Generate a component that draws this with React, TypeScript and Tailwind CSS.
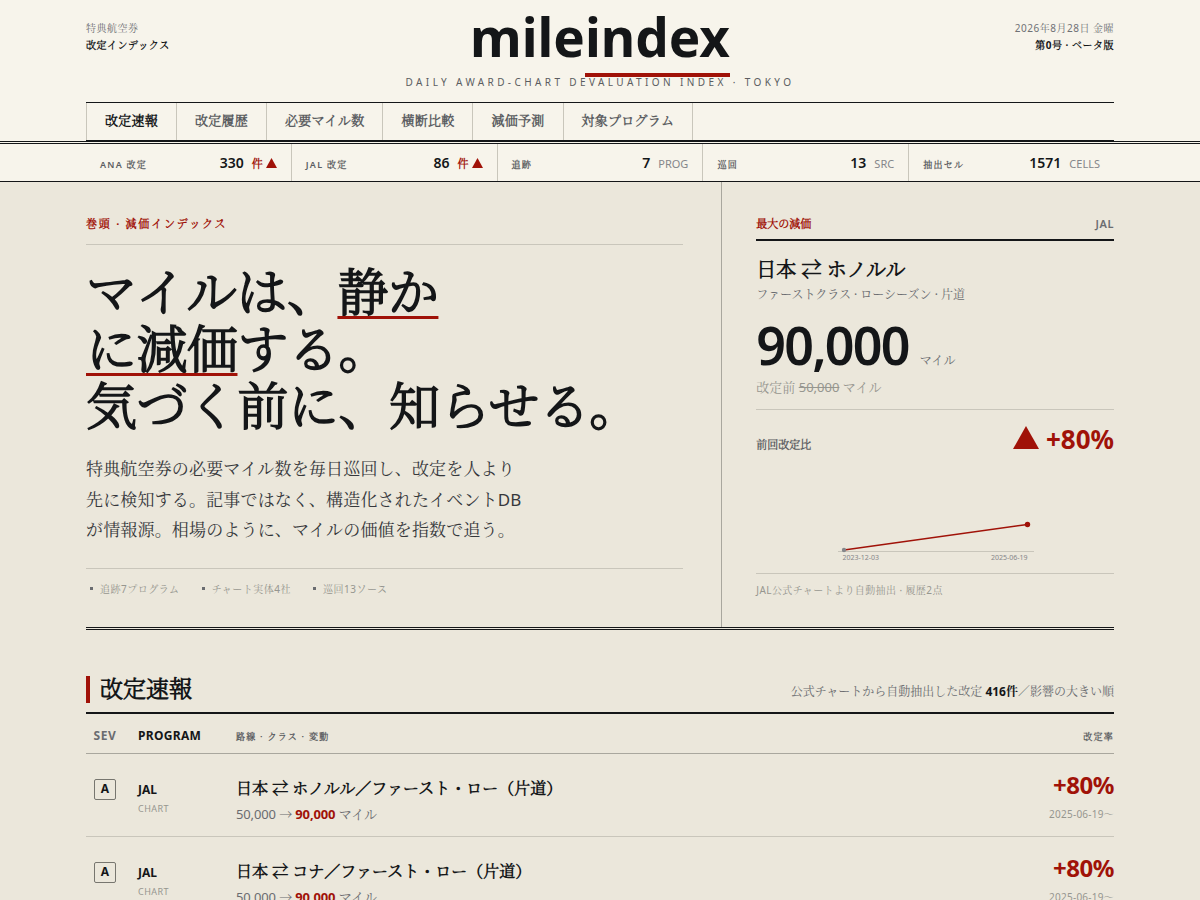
import type { ReactNode } from 'react';

// running text uses the regular cut, headings and labels embolden the light one
const PLAIN = "font-['Noto_Sans','Noto_Serif_CJK_JP','Noto_Sans_CJK_JP',serif]";

const NAV = ['改定速報', '改定履歴', '必要マイル数', '横断比較', '減価予測', '対象プログラム'];

interface Tick {
  label: string;
  value: string;
  unit: string;
  up?: boolean;
}

const TICKS: Tick[] = [
  { label: 'ANA 改定', value: '330', unit: '件', up: true },
  { label: 'JAL 改定', value: '86', unit: '件', up: true },
  { label: '追跡', value: '7', unit: 'PROG' },
  { label: '巡回', value: '13', unit: 'SRC' },
  { label: '抽出セル', value: '1571', unit: 'CELLS' },
];

const FACTS = ['追跡7プログラム', 'チャート実体4社', '巡回13ソース'];

const REVISIONS = [
  { sev: 'A', program: 'JAL', route: '日本 ⇄ ホノルル／ファースト・ロー（片道）', from: '50,000', to: '90,000', rate: '+80%', date: '2025-06-19〜' },
  { sev: 'A', program: 'JAL', route: '日本 ⇄ コナ／ファースト・ロー（片道）', from: '50,000', to: '90,000', rate: '+80%', date: '2025-06-19〜' },
];

function Container({ children }: { children: ReactNode }) {
  return <div className="mx-auto w-full max-w-[1100px] px-9">{children}</div>;
}

function Masthead() {
  return (
    <header className="border-b-3 border-double border-[#141618] bg-[#f7f4eb]">
      <Container>
        <div className="grid grid-cols-[1fr_auto_1fr] items-start pb-3">
          <p className="pt-5 text-[10px] leading-[17px] tracking-wider text-[#6f7175]">
            <span className={PLAIN}>特典航空券</span>
            <br />
            <b className="font-bold text-[#141618]">改定インデックス</b>
          </p>
          <div className="text-center">
            <h1 className="pt-[11px] text-[53px] leading-[52px] font-bold">
              <a href="#top">
                mile<span className="border-b-4 border-[#a01208]">index</span>
              </a>
            </h1>
            <p className="pt-[11px] text-[10px] leading-4 tracking-[0.34em] text-[#5b5d61]">
              DAILY AWARD-CHART DEVALUATION INDEX · TOKYO
            </p>
          </div>
          <p className="pt-5 text-right text-[10px] leading-[17px] tracking-wider text-[#6f7175]">
            <span className={PLAIN}>2026年8月28日 金曜</span>
            <br />
            <b className="font-bold text-[#141618]">第0号 · ベータ版</b>
          </p>
        </div>
        <nav className="flex border-y border-[#141618]">
          {NAV.map((item, i) => (
            <a
              key={item}
              href={`#nav-${i}`}
              className={`border-r border-[#c9c6bb] px-[18px] pt-[7px] pb-[9px] text-[13px] leading-[21px] font-semibold tracking-[0.02em] first:border-l ${
                i === 0 ? 'text-[#141618]' : 'text-[#5b5d61]'
              }`}
            >
              {item}
            </a>
          ))}
        </nav>
      </Container>
    </header>
  );
}

function Ticker() {
  return (
    <div className="border-b border-[#141618] bg-[#f7f4eb]">
      <Container>
        <dl className="grid grid-cols-5 gap-px bg-[#c9c6bb]">
          {TICKS.map((tick) => (
            <div key={tick.label} className="flex items-baseline justify-between bg-[#f7f4eb] px-3.5 pt-2 pb-1.5">
              <dt className="text-[9px] leading-[21px] font-semibold tracking-[0.14em] text-[#5b5d61]">{tick.label}</dt>
              <dd className="flex items-baseline gap-2 text-sm leading-[21px] font-semibold">
                {tick.value}
                {tick.up ? (
                  <span className="flex items-baseline gap-[3px] text-[11px] font-bold text-[#a01208]">
                    {tick.unit}
                    <svg className="h-[10px] w-[11px]" viewBox="0 0 11 10" aria-hidden="true">
                      <path d="M5.5 0L11 10H0z" fill="currentColor" />
                    </svg>
                  </span>
                ) : (
                  <span className="text-[11px] font-normal text-[#85868a]">{tick.unit}</span>
                )}
              </dd>
            </div>
          ))}
        </dl>
      </Container>
    </div>
  );
}

function Lead() {
  return (
    <div className="pt-[33px] pr-[38px] pb-7">
      <p className="border-b border-[#c9c6bb] pb-[11px] text-[11px] leading-[18px] font-bold tracking-[0.16em] text-[#a01208]">
        巻頭 · 減価インデックス
      </p>
      <h2 className="pt-[18px] text-[51px] leading-[57px] font-semibold tracking-[-0.01em]">
        マイルは、
        <em className="not-italic underline decoration-[#a01208] decoration-3 underline-offset-[5px] [text-decoration-skip-ink:none]">
          静か
          <br />
          に減価
        </em>
        する。
        <br />
        気づく前に、知らせる。
      </h2>
      <p className={`max-w-[442px] pt-5 text-[17px] leading-[1.8] tracking-[0.01em] text-[#36383b] ${PLAIN}`}>
        特典航空券の必要マイル数を毎日巡回し、改定を人より先に検知する。記事ではなく、構造化されたイベントDBが情報源。相場のように、マイルの価値を指数で追う。
      </p>
      <ul
        className={`mt-[22px] flex gap-[18px] border-t border-[#c9c6bb] pt-[11px] pb-px text-[10px] leading-[18px] tracking-wider text-[#96968f] ${PLAIN}`}
      >
        {FACTS.map((fact) => (
          <li key={fact} className="flex items-center gap-[7px] pl-1">
            <span className="size-[3px] bg-[#6a6c70]" />
            {fact}
          </li>
        ))}
      </ul>
    </div>
  );
}

function Sparkline() {
  return (
    <svg className="mx-auto block h-[108px] w-[204px]" viewBox="0 0 204 108" role="img" aria-label="必要マイル数の推移">
      <path d="M5 96.5H201" stroke="#c9c6bb" />
      <path d="M11 95L194.500 69.500" stroke="#a01208" strokeWidth="1.500" />
      <circle cx="11" cy="95" r="2.200" fill="#85868a" />
      <circle cx="194.500" cy="69.500" r="2.700" fill="#a01208" />
      <text x="9.500" y="105" fontSize="7" fill="#85868a">
        2023-12-03
      </text>
      <text x="194.500" y="105" fontSize="7" fill="#85868a" textAnchor="end">
        2025-06-19
      </text>
    </svg>
  );
}

function TopDevaluation() {
  return (
    <aside className="border-l border-[#a9a79e] pt-[33px] pb-7 pl-[34px]">
      <div className="flex items-baseline justify-between border-b-2 border-[#141618] pb-1.5 text-[11px] leading-[18px] font-bold">
        <h3 className="text-[#a01208]">最大の減価</h3>
        <span className="font-semibold tracking-wider text-[#6a6c70]">JAL</span>
      </div>
      <p className="pt-3.5 text-xl leading-[30px] font-semibold">日本 ⇄ ホノルル</p>
      <p className={`text-xs leading-5 text-[#6a6c70] ${PLAIN}`}>ファーストクラス · ローシーズン · 片道</p>
      <p className="flex items-baseline gap-[11px] pt-[13px]">
        <span className="text-[52px] leading-[54px] font-semibold tracking-[-0.035em]">90,000</span>
        <span className={`text-xs text-[#6a6c70] ${PLAIN}`}>マイル</span>
      </p>
      <p className={`pt-[5px] pb-3 text-[13px] leading-5 text-[#96968f] ${PLAIN}`}>
        改定前 <s>50,000</s> マイル
      </p>
      <div className="flex items-baseline justify-between border-t border-[#c9c6bb] pt-[13px]">
        <span className="text-[11px] font-semibold text-[#5b5d61]">前回改定比</span>
        <span className="flex items-baseline gap-[7px] text-[26px] leading-8 font-bold text-[#a01208]">
          <svg className="h-[23px] w-[26px]" viewBox="0 0 26 23" aria-hidden="true">
            <path d="M13 0L26 23H0z" fill="currentColor" />
          </svg>
          +80%
        </span>
      </div>
      <Sparkline />
      <p className={`mt-2.5 border-t border-[#c9c6bb] pt-2 text-[10px] leading-4 tracking-[0.04em] text-[#96968f] ${PLAIN}`}>
        JAL公式チャートより自動抽出 · 履歴2点
      </p>
    </aside>
  );
}

function Revisions() {
  return (
    <section className="pt-[46px]">
      <div className="flex items-end justify-between border-b-2 border-[#141618] pb-[9px]">
        <h2 className="border-l-4 border-[#a01208] pb-[3px] pl-2.5 text-[23px] leading-6 font-semibold">改定速報</h2>
        <p className={`text-xs leading-[22px] text-[#6a6c70] ${PLAIN}`}>
          公式チャートから自動抽出した改定 <b className="font-bold text-[#141618]">416件</b>／影響の大きい順
        </p>
      </div>
      <table className="w-full table-fixed border-separate border-spacing-0 text-left">
        <colgroup>
          <col className="w-[52px]" />
          <col className="w-[98px]" />
          <col />
          <col className="w-[120px]" />
        </colgroup>
        <thead>
          <tr className="h-10 text-[9px] tracking-[0.14em] text-[#5b5d61] *:border-b *:border-[#a9a79e] *:pt-1.5">
            <th className="pr-3.5 text-center text-xs font-bold tracking-wider text-[#6a6c70]">SEV</th>
            <th className="text-xs font-bold tracking-wide text-[#141618]">PROGRAM</th>
            <th className="font-semibold">路線 · クラス · 変動</th>
            <th className="text-right font-semibold">改定率</th>
          </tr>
        </thead>
        <tbody>
          {REVISIONS.map((row) => (
            <tr key={row.route} className="align-top *:border-b *:border-[#c9c6bb]">
              <td className="pt-[25px] pr-3.5">
                <span className="mx-auto flex h-[21px] w-[22px] items-center justify-center rounded-xs border border-[#77766f] text-xs font-bold">
                  {row.sev}
                </span>
              </td>
              <td className="pt-[26px]">
                <p className="text-xs leading-5 font-bold">{row.program}</p>
                <p className="text-[9px] leading-[18px] tracking-wider text-[#96968f]">CHART</p>
              </td>
              <td className="pt-[21px] pb-[11px]">
                <p className="text-base leading-[26px] font-semibold">{row.route}</p>
                <p className={`pt-0.5 text-[13px] leading-[22px] tracking-[-0.01em] text-[#6a6c70] ${PLAIN}`}>
                  {row.from} → <b className="font-bold text-[#a01208]">{row.to}</b> マイル
                </p>
              </td>
              <td className="pt-[17px] text-right">
                <p className="text-2xl leading-7 font-bold tracking-[-0.02em] text-[#a01208]">{row.rate}</p>
                <p className={`pt-1.5 text-[10px] leading-[18px] tracking-wide text-[#96968f] ${PLAIN}`}>{row.date}</p>
              </td>
            </tr>
          ))}
        </tbody>
      </table>
    </section>
  );
}

export default function App() {
  return (
    <div
      id="top"
      lang="ja"
      className="min-h-screen bg-[#ebe7db] font-['Noto_Sans','Noto_Serif_CJK_JP_Light','Noto_Serif_CJK_JP','Noto_Sans_CJK_JP',serif] text-[#141618]"
    >
      <Masthead />
      <Ticker />
      <Container>
        <section className="grid grid-cols-[1.618fr_1fr] border-b-3 border-double border-[#141618]">
          <Lead />
          <TopDevaluation />
        </section>
        <Revisions />
      </Container>
    </div>
  );
}
